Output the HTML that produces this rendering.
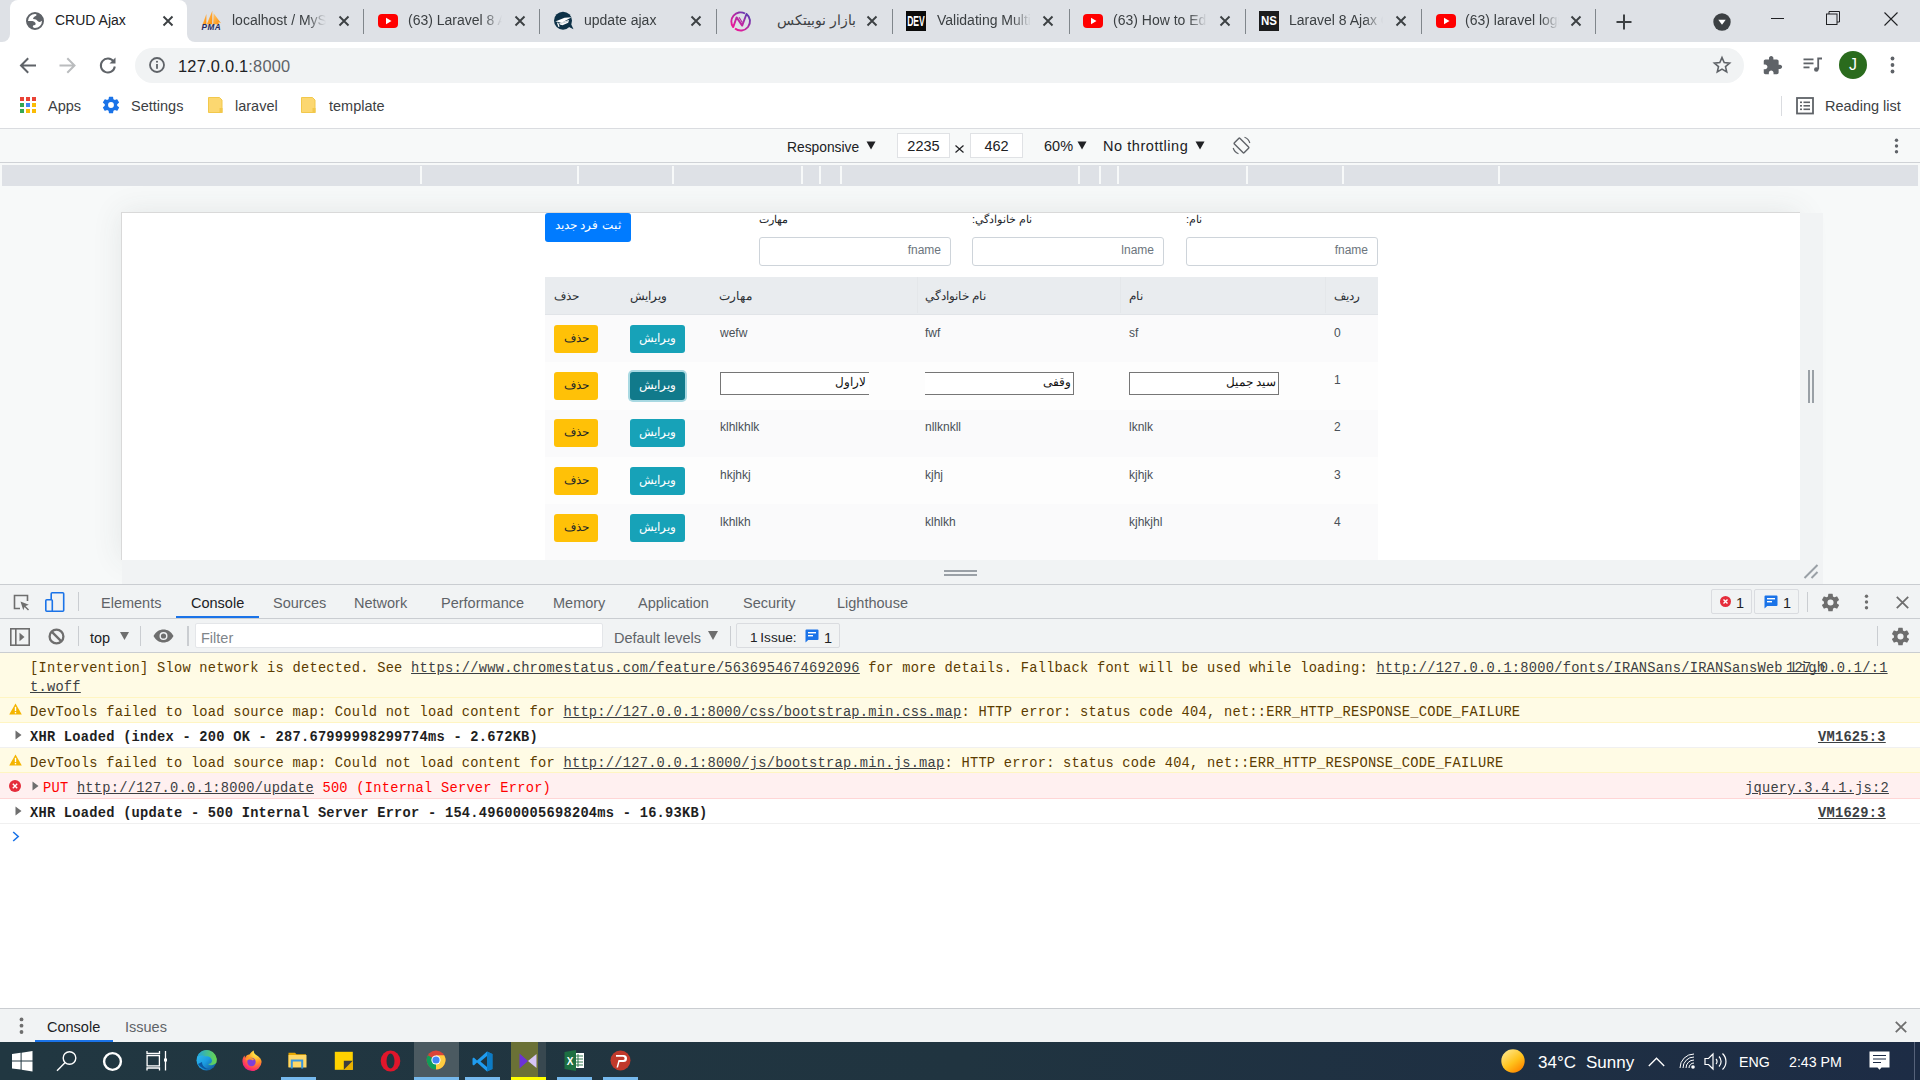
<!DOCTYPE html>
<html><head><meta charset="utf-8">
<style>
*{box-sizing:border-box}
html,body{margin:0;padding:0}
body{width:1920px;height:1080px;position:relative;overflow:hidden;background:#fff;font-family:"Liberation Sans",sans-serif;color:#202124}
.a{position:absolute}
svg{position:absolute;overflow:visible}
.t{position:absolute;white-space:nowrap;line-height:1}
/* tabs */
.tabtxt{position:absolute;top:11px;font-size:14px;color:#3c4043;white-space:nowrap;overflow:hidden;line-height:18px}
.sep{position:absolute;top:9px;width:1px;height:25px;background:#80868b}
.fade{-webkit-mask-image:linear-gradient(90deg,#000 80%,transparent 100%)}
.mono{font-family:"Liberation Mono",monospace;font-size:13.73px;letter-spacing:0.235px}
.tb{top:596px;font-size:14.5px}
.tb2{top:630.5px;font-size:14.5px}
.tb3{top:1020px;font-size:14.5px}
.ui{font-size:15px;color:#5f6368}
</style></head>
<body>
<!-- ============ TAB STRIP ============ -->
<div class="a" style="left:0;top:0;width:1920px;height:42px;background:#dee1e6"></div>
<!-- active tab -->
<div class="a" style="left:10px;top:0;width:177px;height:43px;background:#fff;border-radius:8px 8px 0 0"></div>
<div class="a" style="left:2px;top:34px;width:8px;height:8px;background:#fff"></div>
<div class="a" style="left:2px;top:34px;width:8px;height:8px;background:#dee1e6;border-bottom-right-radius:8px"></div>
<div class="a" style="left:187px;top:34px;width:8px;height:8px;background:#fff"></div>
<div class="a" style="left:187px;top:34px;width:8px;height:8px;background:#dee1e6;border-bottom-left-radius:8px"></div>

<!-- TABCONTENT -->
<svg style="left:26px;top:12px" width="18" height="18"><circle cx="9" cy="9" r="8" fill="#fff" stroke="#5f6368" stroke-width="2"/><path d="M10.4 1.5L10.4 3.4Q9.2 4 8 4.9Q7 6 7.1 7.1L9 7.35Q10.6 7.7 11.3 8.8Q12.2 10 13.5 9.9Q15 9.4 16.3 8.4L16.3 5Q15.2 2.6 13.4 1.8Z" fill="#5f6368"/><path d="M0.9 9L6.5 9.1Q8.6 9.6 9.5 11Q10 12.4 9 13.1L7.1 13.4Q6.4 14.4 7.2 15.3L8 16.4L5.6 16.4Q2.8 14.8 1.6 12.6Z" fill="#5f6368"/></svg>
<div class="tabtxt" style="left:55px;width:100px;color:#202124">CRUD Ajax</div>
<svg style="left:162.5px;top:16px" width="10" height="10"><path d="M0.5 0.5L9.5 9.5M9.5 0.5L0.5 9.5" stroke="#3c4043" stroke-width="1.9"/></svg>
<svg style="left:200px;top:10px" width="23" height="22"><defs><linearGradient id="pg" x1="0" y1="0" x2="1" y2="1"><stop offset="0" stop-color="#ffc870"/><stop offset="1" stop-color="#ff8a00"/></linearGradient></defs><path d="M2.6 14.2L6.4 4L6.3 14.2Z" fill="url(#pg)"/><path d="M6.8 14.2L12.3 0.8L12.2 14.2Z" fill="url(#pg)"/><path d="M13.2 14.2L13.6 3.2L21 13.2L18.6 12L18.8 14.2Z" fill="url(#pg)"/><text x="11.3" y="20" font-size="8.2" font-weight="bold" font-style="italic" fill="#272a5e" text-anchor="middle" font-family="Liberation Sans" letter-spacing="0.4">PMA</text></svg>
<div class="tabtxt fade" style="left:232px;width:94px">localhost / MySQL</div>
<svg style="left:339px;top:16px" width="10" height="10"><path d="M0.5 0.5L9.5 9.5M9.5 0.5L0.5 9.5" stroke="#3c4043" stroke-width="1.9"/></svg>
<div class="sep" style="left:363px"></div>
<svg style="left:378px;top:14px" width="20" height="14"><rect x="0" y="0" width="20" height="14" rx="4" fill="#f00"/><path d="M8 3.8L13.5 7L8 10.2Z" fill="#fff"/></svg>
<div class="tabtxt fade" style="left:408px;width:94px">(63) Laravel 8 Ajax</div>
<svg style="left:515px;top:16px" width="10" height="10"><path d="M0.5 0.5L9.5 9.5M9.5 0.5L0.5 9.5" stroke="#3c4043" stroke-width="1.9"/></svg>
<div class="sep" style="left:539px"></div>
<svg style="left:553px;top:10px" width="22" height="22"><circle cx="10" cy="10.7" r="9" fill="#0d3147"/><path d="M15 16.5L20.5 19.3L17.8 13.5Z" fill="#0d3147"/><path d="M2.3 11.6L11.5 7.8L18.6 7.2L9.2 12.6Z" fill="#fff"/><path d="M6.2 12.8L16 10L15.2 12.8L9.5 15.2L6.8 14.6Z" fill="#fff"/><path d="M7.3 13.6L14.8 11.4" stroke="#9fb0bb" stroke-width="0.6"/><path d="M4.6 12.6L6 16.8" stroke="#fff" stroke-width="1.3"/></svg>
<div class="tabtxt fade" style="left:584px;width:94px">update ajax</div>
<svg style="left:691px;top:16px" width="10" height="10"><path d="M0.5 0.5L9.5 9.5M9.5 0.5L0.5 9.5" stroke="#3c4043" stroke-width="1.9"/></svg>
<div class="sep" style="left:716px"></div>
<svg style="left:729px;top:10px" width="22" height="22"><defs><linearGradient id="ng" x1="0" y1="1" x2="1" y2="0"><stop offset="0" stop-color="#ff1493"/><stop offset="0.55" stop-color="#b02aa6"/><stop offset="1" stop-color="#3f3fb5"/></linearGradient></defs><path d="M16 3.5A9.2 9.2 0 0 0 4.2 17.1L7.6 7.4L13.2 15.6L17.5 4A9.2 9.2 0 0 1 6 18.5" fill="none" stroke="url(#ng)" stroke-width="1.9" stroke-linejoin="round"/><path d="M10 7.2L13.4 12.6" stroke="url(#ng)" stroke-width="1.1"/></svg>
<div class="tabtxt" style="left:760px;width:96px;text-align:right;direction:rtl">بازار نوبیتکس</div>
<svg style="left:867px;top:16px" width="10" height="10"><path d="M0.5 0.5L9.5 9.5M9.5 0.5L0.5 9.5" stroke="#3c4043" stroke-width="1.9"/></svg>
<div class="sep" style="left:892px"></div>
<svg style="left:906px;top:11px" width="20" height="20"><rect width="20" height="20" fill="#0a0a0a"/><text x="1.2" y="14.6" font-size="14.5" font-weight="bold" fill="#fff" font-family="Liberation Sans" textLength="17.6" lengthAdjust="spacingAndGlyphs">DEV</text></svg>
<div class="tabtxt fade" style="left:937px;width:94px">Validating Multiple</div>
<svg style="left:1043px;top:16px" width="10" height="10"><path d="M0.5 0.5L9.5 9.5M9.5 0.5L0.5 9.5" stroke="#3c4043" stroke-width="1.9"/></svg>
<div class="sep" style="left:1069px"></div>
<svg style="left:1083px;top:14px" width="20" height="14"><rect x="0" y="0" width="20" height="14" rx="4" fill="#f00"/><path d="M8 3.8L13.5 7L8 10.2Z" fill="#fff"/></svg>
<div class="tabtxt fade" style="left:1113px;width:94px">(63) How to Edit</div>
<svg style="left:1220px;top:16px" width="10" height="10"><path d="M0.5 0.5L9.5 9.5M9.5 0.5L0.5 9.5" stroke="#3c4043" stroke-width="1.9"/></svg>
<div class="sep" style="left:1245px"></div>
<svg style="left:1259px;top:11px" width="20" height="20"><rect width="20" height="20" fill="#1c1c1c"/><text x="2" y="14.3" font-size="13.5" font-weight="bold" fill="#fff" font-family="Liberation Sans" textLength="16" lengthAdjust="spacingAndGlyphs">NS</text></svg>
<div class="tabtxt fade" style="left:1289px;width:94px">Laravel 8 Ajax CRUD</div>
<svg style="left:1396px;top:16px" width="10" height="10"><path d="M0.5 0.5L9.5 9.5M9.5 0.5L0.5 9.5" stroke="#3c4043" stroke-width="1.9"/></svg>
<div class="sep" style="left:1421px"></div>
<svg style="left:1436px;top:14px" width="20" height="14"><rect x="0" y="0" width="20" height="14" rx="4" fill="#f00"/><path d="M8 3.8L13.5 7L8 10.2Z" fill="#fff"/></svg>
<div class="tabtxt fade" style="left:1465px;width:94px">(63) laravel login</div>
<svg style="left:1571px;top:16px" width="10" height="10"><path d="M0.5 0.5L9.5 9.5M9.5 0.5L0.5 9.5" stroke="#3c4043" stroke-width="1.9"/></svg>
<div class="sep" style="left:1595px"></div>
<svg style="left:1616px;top:14px" width="16" height="16"><path d="M8 0.5V15.5M0.5 8H15.5" stroke="#3c4043" stroke-width="2"/></svg>
<svg style="left:1713px;top:13px" width="18" height="18"><circle cx="9" cy="9" r="8.7" fill="#3c4043"/><path d="M5.3 6.8H12.7L9 11.8Z" fill="#fff"/></svg>
<div class="a" style="left:1771px;top:18px;width:13px;height:1px;background:#202124"></div>
<svg style="left:1826px;top:11px" width="15" height="15"><rect x="0.5" y="3" width="10.5" height="10.5" fill="none" stroke="#202124" stroke-width="1"/><path d="M3 3V0.5H13.5V11H11" fill="none" stroke="#202124" stroke-width="1"/></svg>
<svg style="left:1884px;top:12px" width="14" height="14"><path d="M0.5 0.5L13.5 13.5M13.5 0.5L0.5 13.5" stroke="#202124" stroke-width="1.1"/></svg>
<!-- ============ TOOLBAR ============ -->
<div class="a" style="left:0;top:42px;width:1920px;height:86px;background:#fff"></div>
<div class="a" style="left:135px;top:48px;width:1609px;height:35px;background:#f1f3f4;border-radius:17.5px"></div>
<div class="a" style="left:0;top:128px;width:1920px;height:1px;background:#dadce0"></div>
<!-- TOOLBARCONTENT -->
<svg style="left:19px;top:57px" width="18" height="17"><path d="M17 8.5H2.5M9.2 1.3L2 8.5L9.2 15.7" fill="none" stroke="#5f6368" stroke-width="2"/></svg>
<svg style="left:59px;top:57px" width="18" height="17"><path d="M0.5 8.5H15M8.3 1.3L15.5 8.5L8.3 15.7" fill="none" stroke="#babcbe" stroke-width="2"/></svg>
<svg style="left:99px;top:56px" width="18" height="18"><path d="M14.6 5.5A7 7 0 1 0 15.8 10.5" fill="none" stroke="#5f6368" stroke-width="2"/><path d="M16.5 1.5V7.5H10.5Z" fill="#5f6368"/></svg>
<svg style="left:149px;top:57px" width="16" height="16"><circle cx="8" cy="8" r="7" fill="none" stroke="#5f6368" stroke-width="1.8"/><rect x="7.1" y="7" width="1.8" height="4.8" fill="#5f6368"/><circle cx="8" cy="4.8" r="1.05" fill="#5f6368"/></svg>
<div class="t" style="left:178px;top:58px;font-size:16.4px;letter-spacing:0.22px;color:#202124">127.0.0.1<span style="color:#5f6368">:8000</span></div>
<svg style="left:1713px;top:56px" width="18" height="18"><path d="M9 1.6L11.2 6.6L16.6 7.1L12.5 10.6L13.7 15.9L9 13.1L4.3 15.9L5.5 10.6L1.4 7.1L6.8 6.6Z" fill="none" stroke="#5f6368" stroke-width="1.6" stroke-linejoin="miter"/></svg>
<svg style="left:1762px;top:55px" width="21" height="21" viewBox="0 0 24 24"><path d="M20.5 11H19V7c0-1.1-.9-2-2-2h-4V3.5C13 2.12 11.88 1 10.5 1S8 2.12 8 3.5V5H4c-1.1 0-1.99.9-1.99 2v3.8H3.5c1.49 0 2.7 1.210 2.7 2.7s-1.21 2.7-2.7 2.7H2V20c0 1.1.9 2 2 2h3.8v-1.5c0-1.49 1.21-2.7 2.7-2.7s2.7 1.21 2.7 2.7V22H17c1.1 0 2-.9 2-2v-4h1.5c1.38 0 2.5-1.12 2.5-2.5S21.88 11 20.5 11z" fill="#5f6368"/></svg>
<svg style="left:1803px;top:57px" width="20" height="16"><rect x="0.5" y="1.5" width="10" height="1.8" fill="#5f6368"/><rect x="0.5" y="5.5" width="10" height="1.8" fill="#5f6368"/><rect x="0.5" y="9.5" width="6" height="1.8" fill="#5f6368"/><path d="M15.2 12.3V1.5H19" fill="none" stroke="#5f6368" stroke-width="1.8"/><circle cx="13.3" cy="12.5" r="2.3" fill="#5f6368"/></svg>
<div class="a" style="left:1839px;top:51px;width:28px;height:28px;border-radius:50%;background:#2a6b1d"></div>
<div class="t" style="left:1839px;top:57px;width:28px;text-align:center;font-size:16px;color:#fff">J</div>
<svg style="left:1890px;top:56px" width="5" height="18"><circle cx="2.5" cy="2.5" r="1.9" fill="#5f6368"/><circle cx="2.5" cy="9" r="1.9" fill="#5f6368"/><circle cx="2.5" cy="15.5" r="1.9" fill="#5f6368"/></svg>
<svg style="left:20px;top:97px" width="16" height="16"><rect x="0" y="0" width="4" height="4" fill="#ea4335"/><rect x="6" y="0" width="4" height="4" fill="#ea4335"/><rect x="12" y="0" width="4" height="4" fill="#ea4335"/><rect x="0" y="6" width="4" height="4" fill="#34a853"/><rect x="6" y="6" width="4" height="4" fill="#4285f4"/><rect x="12" y="6" width="4" height="4" fill="#fbbc05"/><rect x="0" y="12" width="4" height="4" fill="#34a853"/><rect x="6" y="12" width="4" height="4" fill="#fbbc05"/><rect x="12" y="12" width="4" height="4" fill="#fbbc05"/></svg>
<div class="t" style="left:48px;top:99px;font-size:14.5px;color:#3c4043">Apps</div>
<svg style="left:101px;top:95px" width="20" height="20" viewBox="0 0 24 24"><path d="M19.4 13c.04-.32.06-.66.06-1s-.02-.68-.07-1l2.1-1.65a.5.5 0 0 0 .12-.64l-2-3.46a.5.5 0 0 0-.6-.22l-2.49 1a7.3 7.3 0 0 0-1.7-.98L14.5 2.4A.5.5 0 0 0 14 2h-4a.5.5 0 0 0-.5.42l-.38 2.65c-.6.25-1.17.58-1.7.98l-2.48-1a.5.5 0 0 0-.6.22l-2 3.46a.5.5 0 0 0 .12.64L4.57 11c-.05.32-.07.66-.07 1s.02.68.07 1l-2.1 1.65a.5.5 0 0 0-.12.64l2 3.46c.12.22.38.3.6.22l2.49-1c.52.4 1.09.73 1.7.98l.37 2.65c.04.24.25.42.5.42h4c.25 0 .46-.18.5-.42l.37-2.65c.61-.25 1.18-.58 1.7-.98l2.49 1c.22.08.48 0 .6-.22l2-3.46a.5.5 0 0 0-.12-.64ZM12 15.5A3.5 3.5 0 1 1 12 8.5a3.5 3.5 0 0 1 0 7z" fill="#1a73e8"/></svg>
<div class="t" style="left:131px;top:99px;font-size:14.5px;color:#3c4043">Settings</div>
<svg style="left:207px;top:97px" width="16" height="17"><path d="M1.5 0.5H12.5L15 3V15.5H1.5Z" fill="#fcd770" stroke="#f2c84b" stroke-width="1"/><rect x="12.5" y="11" width="3" height="5" fill="#f2c84b"/></svg>
<div class="t" style="left:235px;top:99px;font-size:14.5px;color:#3c4043">laravel</div>
<svg style="left:300px;top:97px" width="16" height="17"><path d="M1.5 0.5H12.5L15 3V15.5H1.5Z" fill="#fcd770" stroke="#f2c84b" stroke-width="1"/><rect x="12.5" y="11" width="3" height="5" fill="#f2c84b"/></svg>
<div class="t" style="left:329px;top:99px;font-size:14.5px;color:#3c4043">template</div>
<div class="a" style="left:1781px;top:96px;width:1px;height:20px;background:#dadce0"></div>
<svg style="left:1796px;top:97px" width="18" height="18"><rect x="1" y="1" width="16" height="15.5" fill="none" stroke="#5f6368" stroke-width="1.8"/><rect x="4" y="4.5" width="2" height="1.6" fill="#5f6368"/><rect x="7.5" y="4.5" width="6.5" height="1.6" fill="#5f6368"/><rect x="4" y="8" width="2" height="1.6" fill="#5f6368"/><rect x="7.5" y="8" width="6.5" height="1.6" fill="#5f6368"/><rect x="4" y="11.5" width="2" height="1.6" fill="#5f6368"/><rect x="7.5" y="11.5" width="6.5" height="1.6" fill="#5f6368"/></svg>
<div class="t" style="left:1825px;top:99px;font-size:14.5px;color:#3c4043">Reading list</div>

<!-- ============ DEVICE TOOLBAR ============ -->
<div class="a" style="left:0;top:129px;width:1920px;height:456px;background:#f7f9f9"></div>
<div class="a" style="left:0;top:162px;width:1920px;height:1px;background:#cfd2d6"></div>
<div class="a" style="left:2px;top:165px;width:1916px;height:21px;background:#dee1e6"></div>

<!-- DEVICECONTENT -->
<div class="t" style="left:787px;top:141px;font-size:13.8px;color:#202124">Responsive</div>
<svg style="left:866px;top:141px" width="10" height="9"><path d="M0.5 0.5H9.5L5 8.5Z" fill="#202124"/></svg>
<div class="a" style="left:897px;top:133px;width:53px;height:25px;background:#fff;border:1px solid #e0e2e5"></div>
<div class="t" style="left:897px;top:139px;width:53px;text-align:center;font-size:14.5px;color:#202124">2235</div>
<svg style="left:955px;top:145px" width="9" height="8"><path d="M0.5 0.5L8.5 7.5M8.5 0.5L0.5 7.5" stroke="#202124" stroke-width="1.2"/></svg>
<div class="a" style="left:970px;top:133px;width:53px;height:25px;background:#fff;border:1px solid #e0e2e5"></div>
<div class="t" style="left:970px;top:139px;width:53px;text-align:center;font-size:14.5px;color:#202124">462</div>
<div class="t" style="left:1044px;top:139px;font-size:14.5px;color:#202124">60%</div>
<svg style="left:1077px;top:141px" width="10" height="9"><path d="M0.5 0.5H9.5L5 8.5Z" fill="#202124"/></svg>
<div class="t" style="left:1103px;top:139px;font-size:14.5px;letter-spacing:0.55px;color:#202124">No throttling</div>
<svg style="left:1195px;top:141px" width="10" height="9"><path d="M0.5 0.5H9.5L5 8.5Z" fill="#202124"/></svg>
<svg style="left:1232px;top:136px" width="19" height="19"><rect x="5.5" y="2.5" width="8" height="14" rx="1" transform="rotate(-45 9.5 9.5)" fill="none" stroke="#5f6368" stroke-width="1.4"/><path d="M12.5 1.3A8.5 8.5 0 0 1 17.8 7" fill="none" stroke="#5f6368" stroke-width="1.2"/><path d="M6.5 17.7A8.5 8.5 0 0 1 1.2 12" fill="none" stroke="#5f6368" stroke-width="1.2"/></svg>
<svg style="left:1894px;top:138px" width="5" height="16"><circle cx="2.5" cy="2.2" r="1.7" fill="#5f6368"/><circle cx="2.5" cy="8" r="1.7" fill="#5f6368"/><circle cx="2.5" cy="13.8" r="1.7" fill="#5f6368"/></svg>
<div class="a" style="left:420px;top:166px;width:2px;height:18px;background:#f7f9f9"></div>
<div class="a" style="left:577px;top:166px;width:2px;height:18px;background:#f7f9f9"></div>
<div class="a" style="left:672px;top:166px;width:2px;height:18px;background:#f7f9f9"></div>
<div class="a" style="left:801px;top:166px;width:2px;height:18px;background:#f7f9f9"></div>
<div class="a" style="left:819px;top:166px;width:2px;height:18px;background:#f7f9f9"></div>
<div class="a" style="left:840px;top:166px;width:2px;height:18px;background:#f7f9f9"></div>
<div class="a" style="left:1078px;top:166px;width:2px;height:18px;background:#f7f9f9"></div>
<div class="a" style="left:1099px;top:166px;width:2px;height:18px;background:#f7f9f9"></div>
<div class="a" style="left:1117px;top:166px;width:2px;height:18px;background:#f7f9f9"></div>
<div class="a" style="left:1246px;top:166px;width:2px;height:18px;background:#f7f9f9"></div>
<div class="a" style="left:1342px;top:166px;width:2px;height:18px;background:#f7f9f9"></div>
<div class="a" style="left:1498px;top:166px;width:2px;height:18px;background:#f7f9f9"></div>
<!-- page frame -->
<div class="a" style="left:121px;top:212px;width:1679px;height:348px;background:#fff;border-top:1px solid #d9d9d9;border-left:1px solid #d9d9d9;box-shadow:0 0 28px rgba(60,64,67,0.10)"></div>
<div class="a" style="left:1800px;top:213px;width:23px;height:371px;background:#f1f3f4"></div>
<div class="a" style="left:122px;top:560px;width:1701px;height:24px;background:#f1f3f4"></div>

<!-- PAGECONTENT -->
<div class="a" style="left:545px;top:213px;width:86px;height:29px;background:#007bff;border-radius:3px"></div>
<div class="t" style="left:545px;top:219px;width:86px;text-align:center;font-size:12px;color:#fff;direction:rtl">ثبت فرد جدید</div>
<div class="t" style="left:759px;top:214px;font-size:11px;color:#212529;direction:rtl">مهارت</div>
<div class="a" style="left:759px;top:237px;width:192px;height:29px;background:#fff;border:1px solid #ced4da;border-radius:3px"></div>
<div class="t" style="left:759px;top:244px;width:182px;text-align:right;font-size:12px;color:#6c757d">fname</div>
<div class="t" style="left:972px;top:214px;font-size:11px;color:#212529;direction:rtl">نام خانوادگي:</div>
<div class="a" style="left:972px;top:237px;width:192px;height:29px;background:#fff;border:1px solid #ced4da;border-radius:3px"></div>
<div class="t" style="left:972px;top:244px;width:182px;text-align:right;font-size:12px;color:#6c757d">lname</div>
<div class="t" style="left:1186px;top:214px;font-size:11px;color:#212529;direction:rtl">نام:</div>
<div class="a" style="left:1186px;top:237px;width:192px;height:29px;background:#fff;border:1px solid #ced4da;border-radius:3px"></div>
<div class="t" style="left:1186px;top:244px;width:182px;text-align:right;font-size:12px;color:#6c757d">fname</div>
<div class="a" style="left:545px;top:315px;width:833px;height:245px;background:#fcfcfd"></div>
<div class="a" style="left:545px;top:277px;width:833px;height:38px;background:#e9ecef;border-bottom:1px solid #e1e4e8"></div>
<div class="a" style="left:917px;top:277px;width:1px;height:36px;background:#e4e7ea"></div>
<div class="a" style="left:1120px;top:277px;width:1px;height:36px;background:#e4e7ea"></div>
<div class="a" style="left:1325px;top:277px;width:1px;height:36px;background:#e4e7ea"></div>
<div class="t" style="left:554px;top:290px;font-size:12px;color:#2b2f33;direction:rtl">حذف</div>
<div class="t" style="left:630px;top:290px;font-size:12px;color:#2b2f33;direction:rtl">ویرایش</div>
<div class="t" style="left:719px;top:290px;font-size:12px;color:#2b2f33;direction:rtl">مهارت</div>
<div class="t" style="left:925px;top:290px;font-size:12px;color:#2b2f33;direction:rtl">نام خانوادگي</div>
<div class="t" style="left:1129px;top:290px;font-size:12px;color:#2b2f33;direction:rtl">نام</div>
<div class="t" style="left:1334px;top:290px;font-size:12px;color:#2b2f33;direction:rtl">ردیف</div>
<div class="a" style="left:545px;top:315px;width:833px;height:47px;background:#fafafb"></div>
<div class="t" style="left:1334px;top:326.6px;font-size:12px;color:#495057">0</div>
<div class="t" style="left:1129px;top:326.6px;font-size:12px;color:#495057">sf</div>
<div class="t" style="left:925px;top:326.6px;font-size:12px;color:#495057">fwf</div>
<div class="t" style="left:720px;top:326.6px;font-size:12px;color:#495057">wefw</div>
<div class="a" style="left:630px;top:325px;width:55px;height:28px;border-radius:3px;background:#17a2b8"></div>
<div class="t" style="left:630px;top:332px;width:55px;text-align:center;font-size:12px;color:#fff;direction:rtl">ویرایش</div>
<div class="a" style="left:554px;top:325px;width:44px;height:28px;border-radius:3px;background:#ffc107"></div>
<div class="t" style="left:554px;top:332px;width:44px;text-align:center;font-size:12px;color:#212529;direction:rtl">حذف</div>
<div class="a" style="left:545px;top:362px;width:833px;height:48px;background:#fdfdfd"></div>
<div class="t" style="left:1334px;top:373.9px;font-size:12px;color:#495057">1</div>
<div class="a" style="left:1129px;top:372px;width:150px;height:23px;background:#fff;border-top:1px solid #767676;border-bottom:1px solid #767676;border-left:1px solid #767676;border-right:1px solid #767676"></div>
<div class="t" style="left:1129px;top:377px;width:147px;text-align:right;font-size:11.5px;color:#111;direction:rtl">سید جمیل</div>
<div class="a" style="left:925px;top:372px;width:149px;height:23px;background:#fff;border-top:1px solid #767676;border-bottom:1px solid #767676;border-left:0px solid #767676;border-right:1px solid #767676"></div>
<div class="t" style="left:925px;top:377px;width:146px;text-align:right;font-size:11.5px;color:#111;direction:rtl">وقفی</div>
<div class="a" style="left:720px;top:372px;width:149px;height:23px;background:#fff;border-top:1px solid #767676;border-bottom:1px solid #767676;border-left:1px solid #767676;border-right:0px solid #767676"></div>
<div class="t" style="left:720px;top:377px;width:146px;text-align:right;font-size:11.5px;color:#111;direction:rtl">لاراول</div>
<div class="a" style="left:628px;top:370px;width:59px;height:32px;border-radius:5px;background:#a9d9e2"></div>
<div class="a" style="left:630px;top:372px;width:55px;height:28px;border-radius:3px;background:#117a8b"></div>
<div class="t" style="left:630px;top:379px;width:55px;text-align:center;font-size:12px;color:#fff;direction:rtl">ویرایش</div>
<div class="a" style="left:554px;top:372px;width:44px;height:28px;border-radius:3px;background:#ffc107"></div>
<div class="t" style="left:554px;top:379px;width:44px;text-align:center;font-size:12px;color:#212529;direction:rtl">حذف</div>
<div class="a" style="left:545px;top:410px;width:833px;height:47px;background:#fafafb"></div>
<div class="t" style="left:1334px;top:421.2px;font-size:12px;color:#495057">2</div>
<div class="t" style="left:1129px;top:421.2px;font-size:12px;color:#495057">lknlk</div>
<div class="t" style="left:925px;top:421.2px;font-size:12px;color:#495057">nllknkll</div>
<div class="t" style="left:720px;top:421.2px;font-size:12px;color:#495057">klhlkhlk</div>
<div class="a" style="left:630px;top:419px;width:55px;height:28px;border-radius:3px;background:#17a2b8"></div>
<div class="t" style="left:630px;top:426px;width:55px;text-align:center;font-size:12px;color:#fff;direction:rtl">ویرایش</div>
<div class="a" style="left:554px;top:419px;width:44px;height:28px;border-radius:3px;background:#ffc107"></div>
<div class="t" style="left:554px;top:426px;width:44px;text-align:center;font-size:12px;color:#212529;direction:rtl">حذف</div>
<div class="a" style="left:545px;top:457px;width:833px;height:47px;background:#fdfdfd"></div>
<div class="t" style="left:1334px;top:468.5px;font-size:12px;color:#495057">3</div>
<div class="t" style="left:1129px;top:468.5px;font-size:12px;color:#495057">kjhjk</div>
<div class="t" style="left:925px;top:468.5px;font-size:12px;color:#495057">kjhj</div>
<div class="t" style="left:720px;top:468.5px;font-size:12px;color:#495057">hkjhkj</div>
<div class="a" style="left:630px;top:467px;width:55px;height:28px;border-radius:3px;background:#17a2b8"></div>
<div class="t" style="left:630px;top:474px;width:55px;text-align:center;font-size:12px;color:#fff;direction:rtl">ویرایش</div>
<div class="a" style="left:554px;top:467px;width:44px;height:28px;border-radius:3px;background:#ffc107"></div>
<div class="t" style="left:554px;top:474px;width:44px;text-align:center;font-size:12px;color:#212529;direction:rtl">حذف</div>
<div class="a" style="left:545px;top:504px;width:833px;height:56px;background:#fafafb"></div>
<div class="t" style="left:1334px;top:515.8px;font-size:12px;color:#495057">4</div>
<div class="t" style="left:1129px;top:515.8px;font-size:12px;color:#495057">kjhkjhl</div>
<div class="t" style="left:925px;top:515.8px;font-size:12px;color:#495057">klhlkh</div>
<div class="t" style="left:720px;top:515.8px;font-size:12px;color:#495057">lkhlkh</div>
<div class="a" style="left:630px;top:514px;width:55px;height:28px;border-radius:3px;background:#17a2b8"></div>
<div class="t" style="left:630px;top:521px;width:55px;text-align:center;font-size:12px;color:#fff;direction:rtl">ویرایش</div>
<div class="a" style="left:554px;top:514px;width:44px;height:28px;border-radius:3px;background:#ffc107"></div>
<div class="t" style="left:554px;top:521px;width:44px;text-align:center;font-size:12px;color:#212529;direction:rtl">حذف</div>
<div class="a" style="left:1808px;top:370px;width:2px;height:33px;background:#9aa0a6"></div>
<div class="a" style="left:1812px;top:370px;width:2px;height:33px;background:#9aa0a6"></div>
<div class="a" style="left:944px;top:570px;width:33px;height:2px;background:#9aa0a6"></div>
<div class="a" style="left:944px;top:574px;width:33px;height:2px;background:#9aa0a6"></div>
<svg style="left:1803px;top:564px" width="16" height="16"><path d="M1.5 14L14.5 1M8.5 14L14.5 8" stroke="#9aa0a6" stroke-width="2"/></svg>
<!-- ============ DEVTOOLS ============ -->
<div class="a" style="left:0;top:584px;width:1920px;height:1px;background:#cacdd1"></div>
<div class="a" style="left:0;top:585px;width:1920px;height:67px;background:#f1f3f4"></div>
<div class="a" style="left:0;top:618px;width:1920px;height:1px;background:#cacdd1"></div>
<div class="a" style="left:0;top:652px;width:1920px;height:1px;background:#cacdd1"></div>
<div class="a" style="left:0;top:653px;width:1920px;height:355px;background:#fff"></div>
<!-- drawer -->
<div class="a" style="left:0;top:1008px;width:1920px;height:1px;background:#cacdd1"></div>
<div class="a" style="left:0;top:1009px;width:1920px;height:33px;background:#f1f3f4"></div>
<!-- DTCONTENT -->
<svg style="left:13px;top:594px" width="17" height="17"><path d="M7 14.5H1.5V1.5H14.5V7" fill="none" stroke="#6e6e6e" stroke-width="1.6"/><path d="M7.5 7.5L15.8 10.8L12.5 12L16 15.5L15 16.5L11.5 13L10.3 16.3Z" fill="#6e6e6e"/></svg>
<svg style="left:45px;top:592px" width="20" height="20"><rect x="6.2" y="0.8" width="12.5" height="18.4" rx="1" fill="none" stroke="#1a73e8" stroke-width="1.6"/><rect x="0.8" y="7.8" width="6.5" height="11.4" rx="1" fill="#f1f3f4" stroke="#1a73e8" stroke-width="1.6"/></svg>
<div class="a" style="left:78px;top:592px;width:1px;height:19px;background:#cacdd1"></div>
<div class="t tb" style="left:101px;color:#5f6368">Elements</div>
<div class="t tb" style="left:191px;color:#202124">Console</div>
<div class="t tb" style="left:273px;color:#5f6368">Sources</div>
<div class="t tb" style="left:354px;color:#5f6368">Network</div>
<div class="t tb" style="left:441px;color:#5f6368">Performance</div>
<div class="t tb" style="left:553px;color:#5f6368">Memory</div>
<div class="t tb" style="left:638px;color:#5f6368">Application</div>
<div class="t tb" style="left:743px;color:#5f6368">Security</div>
<div class="t tb" style="left:837px;color:#5f6368">Lighthouse</div>
<div class="a" style="left:176px;top:616px;width:83px;height:2px;background:#1a73e8"></div>
<div class="a" style="left:1711px;top:589px;width:41px;height:25px;border:1px solid #dadce0;border-radius:2px"></div>
<svg style="left:1720px;top:596px" width="11" height="11"><circle cx="5.5" cy="5.5" r="5.5" fill="#e52d3b"/><path d="M3.5 3.5L7.5 7.5M7.5 3.5L3.5 7.5" stroke="#fff" stroke-width="1.4"/></svg>
<div class="t tb" style="left:1736px;color:#202124">1</div>
<div class="a" style="left:1754px;top:589px;width:45px;height:25px;border:1px solid #dadce0;border-radius:2px"></div>
<svg style="left:1764px;top:595px" width="14" height="14"><path d="M1.5 0.5H12.5A1 1 0 0 1 13.5 1.5V10A1 1 0 0 1 12.5 11H3.2L0.5 13.5V1.5A1 1 0 0 1 1.5 0.5Z" fill="#1a73e8"/><rect x="3" y="3" width="8" height="1.4" fill="#fff"/><rect x="3" y="6" width="5" height="1.4" fill="#fff"/></svg>
<div class="t tb" style="left:1783px;color:#202124">1</div>
<div class="a" style="left:1807px;top:592px;width:1px;height:20px;background:#cacdd1"></div>
<svg style="left:1820px;top:592px" width="21" height="21" viewBox="0 0 24 24"><path d="M19.4 13c.04-.32.06-.66.06-1s-.02-.68-.07-1l2.1-1.65a.5.5 0 0 0 .12-.64l-2-3.46a.5.5 0 0 0-.6-.22l-2.49 1a7.3 7.3 0 0 0-1.7-.98L14.5 2.4A.5.5 0 0 0 14 2h-4a.5.5 0 0 0-.5.42l-.38 2.65c-.6.25-1.17.58-1.7.98l-2.48-1a.5.5 0 0 0-.6.22l-2 3.46a.5.5 0 0 0 .12.64L4.57 11c-.05.32-.07.66-.07 1s.02.68.07 1l-2.1 1.65a.5.5 0 0 0-.12.64l2 3.46c.12.22.38.3.6.22l2.49-1c.52.4 1.09.73 1.7.98l.37 2.65c.04.24.25.42.5.42h4c.25 0 .46-.18.5-.42l.37-2.65c.61-.25 1.18-.58 1.7-.98l2.49 1c.22.08.48 0 .6-.22l2-3.46a.5.5 0 0 0-.12-.64ZM12 15.5A3.5 3.5 0 1 1 12 8.5a3.5 3.5 0 0 1 0 7z" fill="#6e6e6e"/></svg>
<svg style="left:1864px;top:594px" width="5" height="16"><circle cx="2.5" cy="2.3" r="1.7" fill="#6e6e6e"/><circle cx="2.5" cy="8" r="1.7" fill="#6e6e6e"/><circle cx="2.5" cy="13.7" r="1.7" fill="#6e6e6e"/></svg>
<svg style="left:1896px;top:596px" width="13" height="13"><path d="M0.8 0.8L12.2 12.2M12.2 0.8L0.8 12.2" stroke="#6e6e6e" stroke-width="1.8"/></svg>
<svg style="left:10px;top:628px" width="20" height="18"><rect x="0.8" y="0.8" width="18.4" height="16.4" fill="none" stroke="#6e6e6e" stroke-width="1.6"/><rect x="5" y="1" width="1.6" height="16" fill="#6e6e6e"/><path d="M9.5 4.8L14.5 9L9.5 13.2Z" fill="#6e6e6e"/></svg>
<svg style="left:48px;top:628px" width="17" height="17"><circle cx="8.5" cy="8.5" r="6.9" fill="none" stroke="#6e6e6e" stroke-width="2.3"/><path d="M3.6 3.6L13.4 13.4" stroke="#6e6e6e" stroke-width="2.3"/></svg>
<div class="a" style="left:78px;top:626px;width:1px;height:20px;background:#cacdd1"></div>
<div class="t tb2" style="left:90px;color:#202124">top</div>
<svg style="left:120px;top:632px" width="9" height="8"><path d="M0 0H9L4.5 8Z" fill="#6e6e6e"/></svg>
<div class="a" style="left:140px;top:626px;width:1px;height:20px;background:#cacdd1"></div>
<svg style="left:153px;top:629px" width="21" height="14"><path d="M0.5 7C3 2.5 6.5 0.5 10.5 0.5S18 2.5 20.5 7C18 11.5 14.5 13.5 10.5 13.5S3 11.5 0.5 7Z" fill="#6e6e6e"/><circle cx="10.5" cy="7" r="4" fill="#f1f3f4"/><circle cx="10.5" cy="7" r="2.6" fill="#6e6e6e"/></svg>
<div class="a" style="left:187px;top:626px;width:2px;height:20px;background:#cacdd1"></div>
<div class="a" style="left:195px;top:623px;width:408px;height:25px;background:#fff;border:1px solid #e4e6e9;border-radius:2px"></div>
<div class="t tb2" style="left:201px;color:#80868b">Filter</div>
<div class="t tb2" style="left:614px;color:#5f6368">Default levels</div>
<svg style="left:708px;top:631px" width="10" height="9"><path d="M0 0H10L5 9Z" fill="#6e6e6e"/></svg>
<div class="a" style="left:730px;top:626px;width:1px;height:20px;background:#cacdd1"></div>
<div class="a" style="left:736px;top:623px;width:104px;height:25px;border:1px solid #dadce0;border-radius:2px"></div>
<div class="t tb2" style="left:750px;color:#202124;font-size:13.6px;word-spacing:-1px">1 Issue:</div>
<svg style="left:805px;top:629px" width="14" height="14"><path d="M1.5 0.5H12.5A1 1 0 0 1 13.5 1.5V10A1 1 0 0 1 12.5 11H3.2L0.5 13.5V1.5A1 1 0 0 1 1.5 0.5Z" fill="#1a73e8"/><rect x="3" y="3" width="8" height="1.4" fill="#fff"/><rect x="3" y="6" width="5" height="1.4" fill="#fff"/></svg>
<div class="t tb2" style="left:824px;color:#202124">1</div>
<div class="a" style="left:1877px;top:626px;width:1px;height:20px;background:#cacdd1"></div>
<svg style="left:1890px;top:626px" width="21" height="21" viewBox="0 0 24 24"><path d="M19.4 13c.04-.32.06-.66.06-1s-.02-.68-.07-1l2.1-1.65a.5.5 0 0 0 .12-.64l-2-3.46a.5.5 0 0 0-.6-.22l-2.49 1a7.3 7.3 0 0 0-1.7-.98L14.5 2.4A.5.5 0 0 0 14 2h-4a.5.5 0 0 0-.5.42l-.38 2.65c-.6.25-1.17.58-1.7.98l-2.48-1a.5.5 0 0 0-.6.22l-2 3.46a.5.5 0 0 0 .12.64L4.57 11c-.05.32-.07.66-.07 1s.02.68.07 1l-2.1 1.65a.5.5 0 0 0-.12.64l2 3.46c.12.22.38.3.6.22l2.49-1c.52.4 1.09.73 1.7.98l.37 2.65c.04.24.25.42.5.42h4c.25 0 .46-.18.5-.42l.37-2.65c.61-.25 1.18-.58 1.7-.98l2.49 1c.22.08.48 0 .6-.22l2-3.46a.5.5 0 0 0-.12-.64ZM12 15.5A3.5 3.5 0 1 1 12 8.5a3.5 3.5 0 0 1 0 7z" fill="#6e6e6e"/></svg>
<div class="a" style="left:0;top:653px;width:1920px;height:45px;background:#fffbe5;border-bottom:1px solid #fff5c2"></div>
<div class="a" style="left:0;top:698px;width:1920px;height:25px;background:#fffbe5;border-bottom:1px solid #fff5c2"></div>
<div class="a" style="left:0;top:723px;width:1920px;height:25px;background:#fff;border-bottom:1px solid #f0f0f0"></div>
<div class="a" style="left:0;top:748px;width:1920px;height:25px;background:#fffbe5;border-bottom:1px solid #fff5c2"></div>
<div class="a" style="left:0;top:773px;width:1920px;height:26px;background:#fff0f0;border-bottom:1px solid #ffd6d6"></div>
<div class="a" style="left:0;top:799px;width:1920px;height:25px;background:#fff;border-bottom:1px solid #f0f0f0"></div>
<div class="t mono" style="left:30px;top:662px;color:#5c3c00">[Intervention] Slow network is detected. See <span style="text-decoration:underline;color:#3c4043">https://www.chromestatus.com/feature/5636954674692096</span> for more details. Fallback font will be used while loading: <span style="text-decoration:underline;color:#3c4043">http://127.0.0.1:8000/fonts/IRANSans/IRANSansWeb_Ligh</span></div>
<div class="t mono" style="left:30px;top:681px;color:#3c4043;text-decoration:underline">t.woff</div>
<div class="t mono" style="left:1786px;top:662px;color:#3c4043;text-decoration:underline">127.0.0.1/:1</div>
<svg style="left:9px;top:703px" width="13" height="12"><path d="M6.5 0.5L12.8 11.5H0.2Z" fill="#f4b400"/><rect x="5.8" y="3.8" width="1.4" height="4.3" fill="#fff"/><rect x="5.8" y="9" width="1.4" height="1.4" fill="#fff"/></svg>
<div class="t mono" style="left:30px;top:706px;color:#5c3c00">DevTools failed to load source map: Could not load content for <span style="text-decoration:underline;color:#3c4043">http://127.0.0.1:8000/css/bootstrap.min.css.map</span>: HTTP error: status code 404, net::ERR_HTTP_RESPONSE_CODE_FAILURE</div>
<svg style="left:15px;top:730px" width="7" height="10"><path d="M0.5 0.5L6.5 5L0.5 9.5Z" fill="#6e6e6e"/></svg>
<div class="t mono" style="left:30px;top:731px;color:#1f1f1f;font-weight:bold">XHR Loaded (index - 200 OK - 287.67999998299774ms - 2.672KB)</div>
<div class="t mono" style="left:1818px;top:731px;color:#3c4043;text-decoration:underline;font-weight:bold">VM1625:3</div>
<svg style="left:9px;top:754px" width="13" height="12"><path d="M6.5 0.5L12.8 11.5H0.2Z" fill="#f4b400"/><rect x="5.8" y="3.8" width="1.4" height="4.3" fill="#fff"/><rect x="5.8" y="9" width="1.4" height="1.4" fill="#fff"/></svg>
<div class="t mono" style="left:30px;top:757px;color:#5c3c00">DevTools failed to load source map: Could not load content for <span style="text-decoration:underline;color:#3c4043">http://127.0.0.1:8000/js/bootstrap.min.js.map</span>: HTTP error: status code 404, net::ERR_HTTP_RESPONSE_CODE_FAILURE</div>
<svg style="left:9px;top:780px" width="12" height="12"><circle cx="6" cy="6" r="6" fill="#e52d3b"/><path d="M3.8 3.8L8.2 8.2M8.2 3.8L3.8 8.2" stroke="#fff" stroke-width="1.4"/></svg>
<svg style="left:32px;top:781px" width="7" height="10"><path d="M0.5 0.5L6.5 5L0.5 9.5Z" fill="#6e6e6e"/></svg>
<div class="t mono" style="left:43px;top:782px;color:#f00">PUT <span style="text-decoration:underline;color:#3c4043">http://127.0.0.1:8000/update</span> 500 (Internal Server Error)</div>
<div class="t mono" style="left:1745px;top:782px;color:#3c4043;text-decoration:underline">jquery.3.4.1.js:2</div>
<svg style="left:15px;top:806px" width="7" height="10"><path d="M0.5 0.5L6.5 5L0.5 9.5Z" fill="#6e6e6e"/></svg>
<div class="t mono" style="left:30px;top:807px;color:#1f1f1f;font-weight:bold">XHR Loaded (update - 500 Internal Server Error - 154.49600005698204ms - 16.93KB)</div>
<div class="t mono" style="left:1818px;top:807px;color:#3c4043;text-decoration:underline;font-weight:bold">VM1629:3</div>
<svg style="left:12px;top:831px" width="8" height="11"><path d="M1.2 1L6.2 5.5L1.2 10" fill="none" stroke="#1a73e8" stroke-width="1.6"/></svg>
<svg style="left:19px;top:1017px" width="5" height="18"><circle cx="2.5" cy="2.4" r="1.9" fill="#6e6e6e"/><circle cx="2.5" cy="8.7" r="1.9" fill="#6e6e6e"/><circle cx="2.5" cy="15" r="1.9" fill="#6e6e6e"/></svg>
<div class="t tb3" style="left:47px;color:#202124">Console</div>
<div class="t tb3" style="left:125px;color:#5f6368">Issues</div>
<div class="a" style="left:35px;top:1040px;width:78px;height:2px;background:#1a73e8"></div>
<svg style="left:1895px;top:1021px" width="12" height="12"><path d="M0.8 0.8L11.2 11.2M11.2 0.8L0.8 11.2" stroke="#6e6e6e" stroke-width="1.8"/></svg>


<!-- ============ TASKBAR ============ -->
<div class="a" style="left:0;top:1042px;width:1920px;height:38px;background:linear-gradient(90deg,#213741 0%,#203440 50%,#1d2c45 100%)"></div>

<!-- TASKCONTENT -->
<svg style="left:12px;top:1051px" width="21" height="21"><path d="M0 3L8.6 1.8V9.6H0Z M9.6 1.65L20.5 0V9.6H9.6Z M0 10.6H8.6V18.6L0 17.4Z M9.6 10.6H20.5V20.5L9.6 18.8Z" fill="#fff"/></svg>
<svg style="left:56px;top:1050px" width="22" height="22"><circle cx="13.5" cy="8" r="6.3" fill="none" stroke="#fff" stroke-width="1.4"/><path d="M9.2 12.5L1 20.8" stroke="#fff" stroke-width="1.4"/></svg>
<svg style="left:102px;top:1051px" width="21" height="21"><circle cx="10.5" cy="10.5" r="8.4" fill="none" stroke="#fff" stroke-width="2.4"/></svg>
<svg style="left:146px;top:1050px" width="22" height="22"><path d="M1 1V3.5H13.5V1M1 20.5V18H13.5V20.5" fill="none" stroke="#fff" stroke-width="1.3"/><rect x="1.1" y="5.6" width="12.3" height="10.3" fill="none" stroke="#fff" stroke-width="1.3"/><path d="M19.5 1V20.5" stroke="#fff" stroke-width="1.3"/><rect x="18" y="8.5" width="3" height="3" fill="#fff"/></svg>
<svg style="left:196px;top:1050px" width="21" height="21"><defs><linearGradient id="eg" x1="0" y1="0" x2="1" y2="1"><stop offset="0" stop-color="#35c1f1"/><stop offset="0.5" stop-color="#1b9de2"/><stop offset="1" stop-color="#114a8b"/></linearGradient><linearGradient id="eg2" x1="0" y1="0" x2="1" y2="0"><stop offset="0" stop-color="#1fa3e0"/><stop offset="1" stop-color="#6ad64a"/></linearGradient></defs><circle cx="10.5" cy="10.5" r="10" fill="url(#eg)"/><path d="M6 12a5 5 0 0 1 10-1.5c0 2.5-2 3.5-4 3.5c2 2 6 1.5 8.5-1.5A10 10 0 0 0 1 7.5C3 5.2 7 4.8 10 6.5c-2.5-.2-4 1.5-4 5.5z" fill="url(#eg2)"/><path d="M6 12c0 4 3.5 7 7.5 7c-4 1-9-1-11.5-5" fill="#0c59a4"/></svg>
<svg style="left:241px;top:1050px" width="22" height="22"><defs><radialGradient id="ff" cx="0.7" cy="0.15" r="0.95"><stop offset="0" stop-color="#fff44f"/><stop offset="0.45" stop-color="#ff9a25"/><stop offset="0.8" stop-color="#ff3b5c"/><stop offset="1" stop-color="#e31587"/></radialGradient></defs><path d="M11 21A9.6 9.6 0 0 1 1.4 11.5C1.4 8.5 2.5 6.5 3.6 5.6L4 8C5 5.5 7 4.4 8.5 4.6C9.5 2.5 11.5 1 13 0.5C12.6 2 13 3.3 14.5 4.5C17.5 6.5 20.6 8.5 20.6 12A9.6 9.6 0 0 1 11 21Z" fill="url(#ff)"/><circle cx="10.5" cy="12" r="4.2" fill="#7f3fd8"/><path d="M5 9.5C7.5 8 11 8.5 12.5 10" fill="none" stroke="#ff9a25" stroke-width="1.6"/></svg>
<svg style="left:288px;top:1052px" width="21" height="19"><path d="M0.5 0.8H7L8.5 2.3H18V15H0.5Z" fill="#e8a600"/><rect x="0.5" y="3" width="18" height="12.5" fill="#ffd766"/><path d="M3.8 16.5V8.5H14.2V16.5" fill="none" stroke="#3a96dd" stroke-width="2"/></svg>
<svg style="left:334px;top:1051px" width="20" height="20"><rect x="0.8" y="0.8" width="18" height="18" fill="#ffd200"/><path d="M9.8 18.8L18.8 9.8V18.8Z" fill="#eab000"/><path d="M9.8 18.8V9.8H18.8Z" fill="#3d3d3d"/></svg>
<svg style="left:380px;top:1050px" width="21" height="22"><ellipse cx="10.5" cy="11" rx="9.8" ry="10.5" fill="#e0162b"/><ellipse cx="10.5" cy="11" rx="4" ry="7.5" fill="#1f3540"/></svg>
<div class="a" style="left:414px;top:1042px;width:45px;height:35px;background:#4b5a61"></div>
<svg style="left:426px;top:1050px" width="20" height="20"><circle cx="10" cy="10" r="9.5" fill="#db4437"/><path d="M10 10L1.8 5.3A9.5 9.5 0 0 0 10 19.5Z" fill="#0f9d58"/><path d="M10 10L10 19.5A9.5 9.5 0 0 0 18.2 5.2L10 5.2Z" fill="#ffcd40"/><circle cx="10" cy="10" r="4.6" fill="#fff"/><circle cx="10" cy="10" r="3.6" fill="#4285f4"/></svg>
<svg style="left:472px;top:1051px" width="21" height="21"><path d="M15 0.5L20.5 3V18L15 20.5L5 11.5L1.8 14.5L0.5 13.5V7.5L1.8 6.5L5 9.5Z" fill="#1f9cf0"/><path d="M15 5V16L8.5 10.5Z" fill="#1f3540"/><path d="M15 0.5L20.5 3V18L15 20.5Z" fill="#0065a9" opacity="0.6"/></svg>
<div class="a" style="left:511px;top:1042px;width:27px;height:35px;background:#6b7136"></div>
<div class="a" style="left:538px;top:1042px;width:8px;height:35px;background:#384850"></div>
<svg style="left:519px;top:1053px" width="18" height="16"><path d="M0.5 0.5L9 8L0.5 15.5Z" fill="#6c33d6"/><path d="M17.5 1L9 8L17.5 15Z" fill="#d7c6f5"/></svg>
<svg style="left:564px;top:1050px" width="21" height="21"><rect x="8" y="3" width="12" height="15" fill="#fff"/><path d="M10 6H19M10 9H19M10 12H19M10 15H19M14 4V17" stroke="#1d6f42" stroke-width="0.9"/><path d="M0.5 2L12 0V21L0.5 19Z" fill="#1d6f42"/><text x="6" y="14.5" font-size="10" font-weight="bold" fill="#fff" text-anchor="middle" font-family="Liberation Sans">X</text></svg>
<svg style="left:610px;top:1050px" width="21" height="21"><circle cx="10.5" cy="10.5" r="10" fill="#c0392b"/><path d="M6 5H13.5A3.5 3.5 0 0 1 13.5 12H9.5L8 17.5H6.5L8.5 10H13A1.6 1.6 0 0 0 13 6.8H6Z" fill="#fff"/></svg>
<div class="a" style="left:281px;top:1077px;width:35px;height:3px;background:#76b9ed"></div>
<div class="a" style="left:414px;top:1077px;width:45px;height:3px;background:#76b9ed"></div>
<div class="a" style="left:465px;top:1077px;width:35px;height:3px;background:#76b9ed"></div>
<div class="a" style="left:511px;top:1077px;width:35px;height:3px;background:#ffff00"></div>
<div class="a" style="left:557px;top:1077px;width:35px;height:3px;background:#76b9ed"></div>
<div class="a" style="left:603px;top:1077px;width:35px;height:3px;background:#76b9ed"></div>
<svg style="left:1501px;top:1049px" width="24" height="24"><defs><linearGradient id="sun" x1="0.2" y1="0.1" x2="0.8" y2="0.9"><stop offset="0" stop-color="#ffe27a"/><stop offset="0.55" stop-color="#ffc21c"/><stop offset="1" stop-color="#ff8a00"/></linearGradient></defs><circle cx="12" cy="12" r="11.7" fill="url(#sun)"/></svg>
<div class="t" style="left:1538px;top:1054px;font-size:17px;color:#fff">34°C</div>
<div class="t" style="left:1586px;top:1054px;font-size:17px;color:#fff">Sunny</div>
<svg style="left:1648px;top:1057px" width="17" height="10"><path d="M0.8 9L8.5 1.2L16.2 9" fill="none" stroke="#fff" stroke-width="1.3"/></svg>
<svg style="left:1679px;top:1053px" width="17" height="17"><path d="M1 15A14 14 0 0 1 15 1M4 15A11 11 0 0 1 15 4M7 15A8 8 0 0 1 15 7M10 15A5 5 0 0 1 15 10" fill="none" stroke="#fff" stroke-width="1"/><circle cx="14" cy="14" r="1.8" fill="#fff"/></svg>
<svg style="left:1704px;top:1052px" width="23" height="19"><path d="M1 6.5H4.5L9 2V17L4.5 12.5H1Z" fill="none" stroke="#fff" stroke-width="1.2"/><path d="M12 7A3.5 3.5 0 0 1 12 12M15 4.5A7 7 0 0 1 15 14.5M18.5 1.5A11 11 0 0 1 18.5 17.5" fill="none" stroke="#fff" stroke-width="1.2"/></svg>
<div class="t" style="left:1739px;top:1055px;font-size:14.2px;color:#fff">ENG</div>
<div class="t" style="left:1789px;top:1055px;font-size:14.2px;color:#fff">2:43 PM</div>
<svg style="left:1869px;top:1051px" width="21" height="22"><path d="M0.5 0.5H20.5V16.5H12.5L10.5 18.8L8.5 16.5H0.5Z" fill="#fff"/><path d="M4 4.5H17M4 8H17M4 11.5H12" stroke="#1b2a45" stroke-width="1.2"/></svg>
<div class="a" style="left:1914px;top:1042px;width:1px;height:38px;background:#56627a"></div>
</body></html>
